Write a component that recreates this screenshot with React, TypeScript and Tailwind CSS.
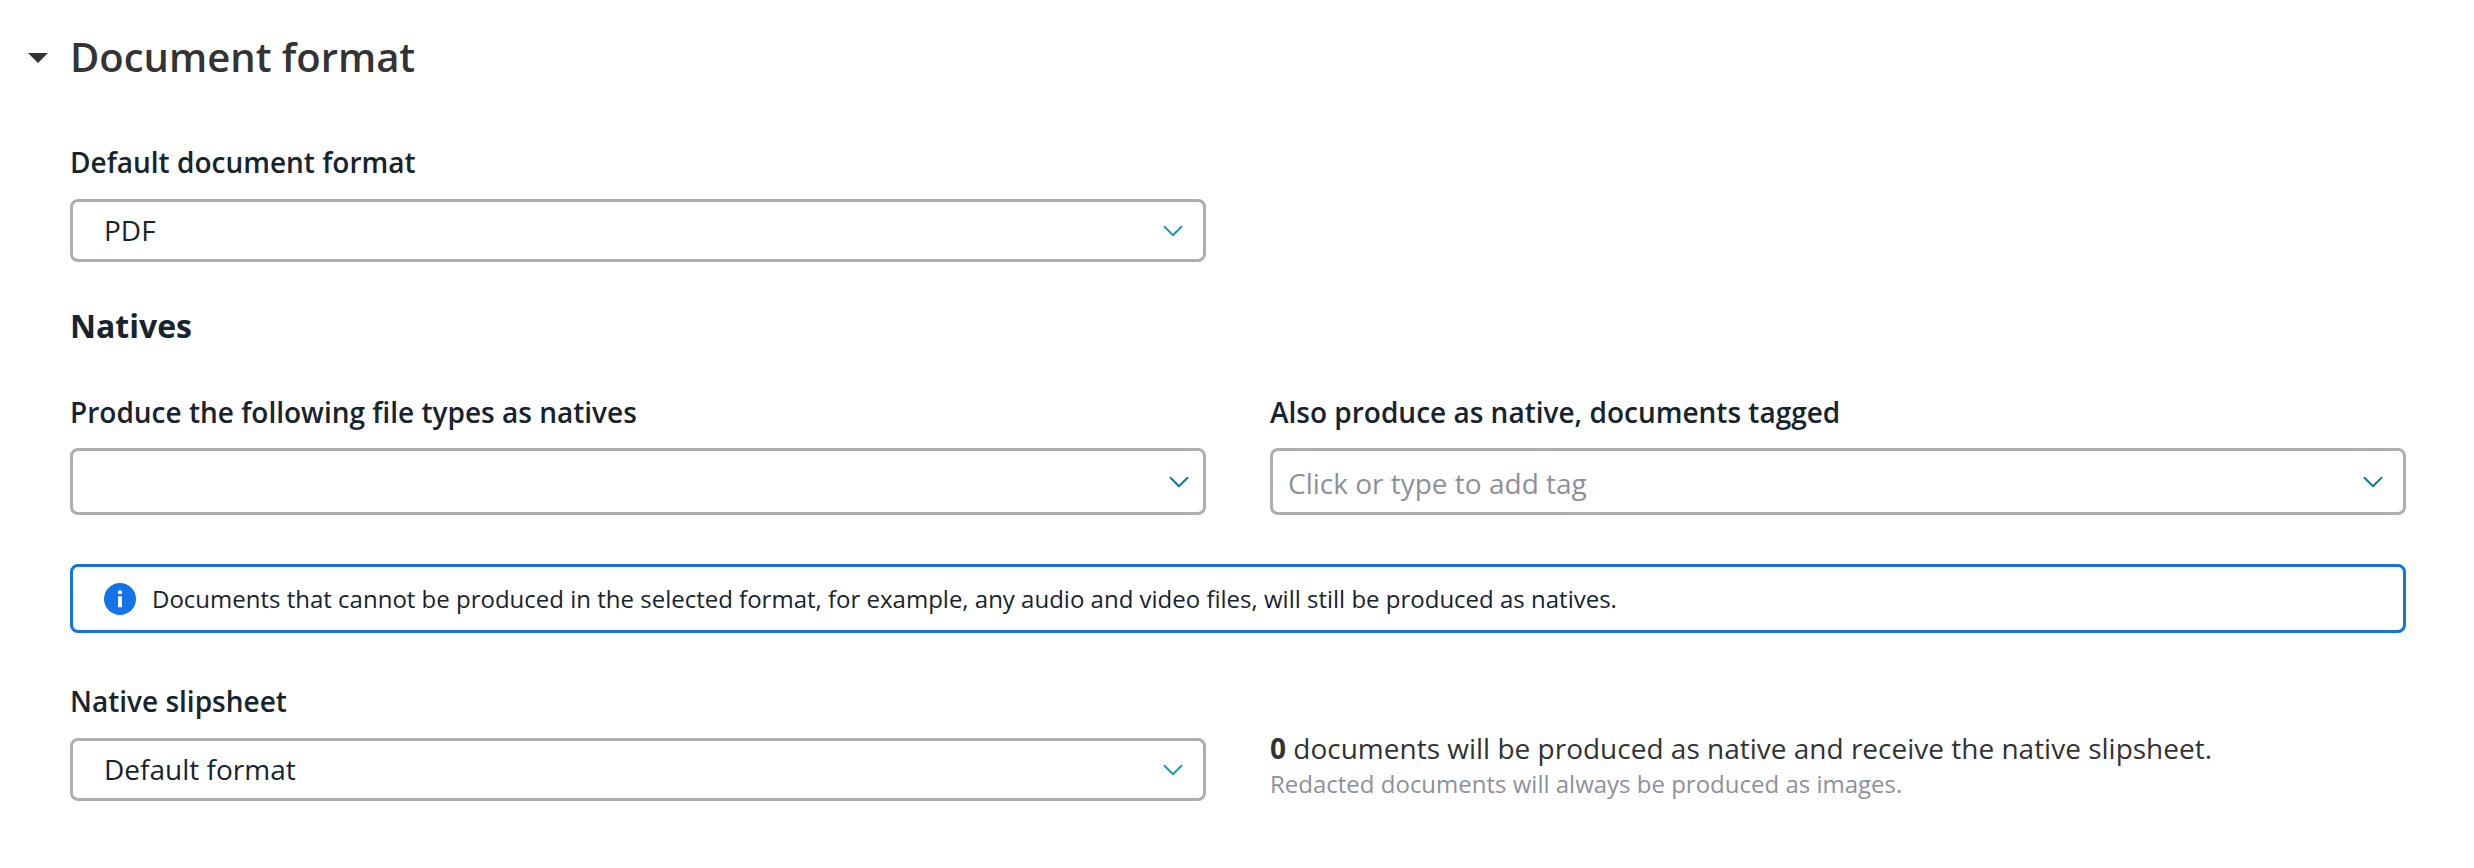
import { ChevronDown } from 'lucide-react'

const sans = "font-['Open_Sans',sans-serif]"
const labelClass = 'block text-[28px] leading-[38px] font-semibold text-[#17242d]'

function Select({ value, placeholder, className, iconClass }: { value?: string; placeholder?: string; className: string; iconClass: string }) {
  return (
    <div className={`flex items-center justify-between rounded-lg border-[3px] border-[#adadb2] bg-white ${className}`}>
      {placeholder ? (
        <span className="mt-[2px] text-[28px] text-[#8e9099]">{placeholder}</span>
      ) : (
        <span className="mb-[2px] text-[28px] text-[#17242d]">{value}</span>
      )}
      <ChevronDown className={`h-[34px] w-[34px] ${iconClass}`} strokeWidth={1.4} />
    </div>
  )
}

export default function App() {
  return (
    <div className={`${sans} h-[868px] w-[2474px] bg-white pl-[70px] pr-[68px] pt-[32px]`}>
      <div className="relative flex items-center">
        <svg className="absolute left-[-42px] top-[21px] h-[10px] w-[20px]" viewBox="0 0 20 10">
          <path d="M0 0h20L10 10z" fill="#333333" />
        </svg>
        <h2 className="text-[40px] leading-[50px] font-semibold text-[#333333]">Document format</h2>
      </div>

      <div className="mt-[61px] w-[1136px]">
        <label className={labelClass}>Default document format</label>
        <div className="mt-[18px]">
          <Select value="PDF" className="h-[63px] pl-[31px] pr-[13px]" iconClass="text-[#1a9cbc]" />
        </div>
      </div>

      <h3 className="mt-[42px] text-[32px] leading-[44px] font-bold text-[#17242d]">Natives</h3>

      <div className="mt-[45px] flex gap-[64px]">
        <div className="w-[1136px]">
          <label className={labelClass}>Produce the following file types as natives</label>
          <div className="mt-[17px]">
            <Select className="h-[67px] pl-[15px] pr-[7px]" iconClass="text-[#0a7d9c]" />
          </div>
        </div>
        <div className="flex-1">
          <label className={labelClass}>Also produce as native, documents tagged</label>
          <div className="mt-[17px]">
            <Select placeholder="Click or type to add tag" className="h-[67px] pl-[15px] pr-[13px]" iconClass="text-[#0a7d9c]" />
          </div>
        </div>
      </div>

      <div className="mt-[49px] flex h-[69px] items-center gap-[16px] rounded-lg border-[3px] border-[#1473e6] pl-[31px]">
        <svg className="h-[32px] w-[32px] shrink-0" viewBox="0 0 32 32">
          <circle cx="16" cy="16" r="16" fill="#1473e6" />
          <circle cx="16" cy="9.3" r="2.1" fill="#fff" />
          <rect x="14" y="13.3" width="4" height="11" fill="#fff" />
        </svg>
        <span className="text-[24px] text-[#17242d]">Documents that cannot be produced in the selected format, for example, any audio and video files, will still be produced as natives.</span>
      </div>

      <div className="mt-[49px] flex gap-[64px]">
        <div className="w-[1136px]">
          <label className={labelClass}>Native slipsheet</label>
          <div className="mt-[18px]">
            <Select value="Default format" className="h-[63px] pl-[31px] pr-[13px]" iconClass="text-[#1a9cbc]" />
          </div>
        </div>
        <div className="flex-1 pt-[47px]">
          <p className="text-[28px] leading-[38px] text-[#333333]"><span className="font-bold">0</span> documents will be produced as native and receive the native slipsheet.</p>
          <p className="mt-[1px] text-[24px] leading-[32px] text-[#8e9099]">Redacted documents will always be produced as images.</p>
        </div>
      </div>
    </div>
  )
}
